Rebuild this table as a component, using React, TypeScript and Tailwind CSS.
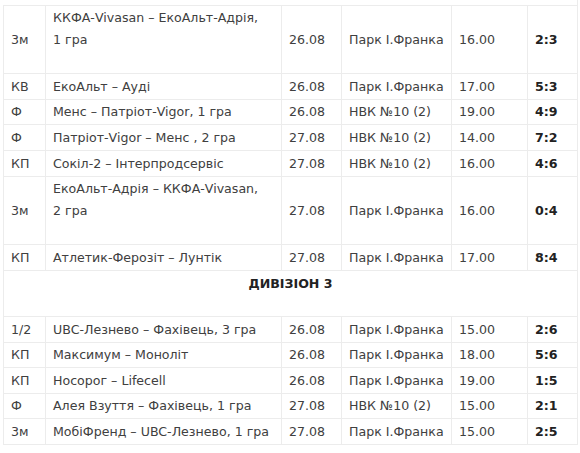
import React from "react";

type Row = {
  stage: string;
  match: string[];
  date: string;
  place: string;
  time: string;
  score: string;
};

const topRows: Row[] = [
  { stage: "3м", match: ["ККФА-Vivasan – ЕкоАльт-Адрія,", "1 гра", ""], date: "26.08", place: "Парк І.Франка", time: "16.00", score: "2:3" },
  { stage: "КВ", match: ["ЕкоАльт – Ауді"], date: "26.08", place: "Парк І.Франка", time: "17.00", score: "5:3" },
  { stage: "Ф", match: ["Менс – Патріот-Vigor, 1 гра"], date: "26.08", place: "НВК №10 (2)", time: "19.00", score: "4:9" },
  { stage: "Ф", match: ["Патріот-Vigor – Менс , 2 гра"], date: "27.08", place: "НВК №10 (2)", time: "14.00", score: "7:2" },
  { stage: "КП", match: ["Сокіл-2 – Інтерпродсервіс"], date: "27.08", place: "НВК №10 (2)", time: "16.00", score: "4:6" },
  { stage: "3м", match: ["ЕкоАльт-Адрія – ККФА-Vivasan,", "2 гра", ""], date: "27.08", place: "Парк І.Франка", time: "16.00", score: "0:4" },
  { stage: "КП", match: ["Атлетик-Ферозіт – Лунтік"], date: "27.08", place: "Парк І.Франка", time: "17.00", score: "8:4" },
];

const div3Rows: Row[] = [
  { stage: "1/2", match: ["UBC-Лезнево – Фахівець, 3 гра"], date: "26.08", place: "Парк І.Франка", time: "15.00", score: "2:6" },
  { stage: "КП", match: ["Максимум – Моноліт"], date: "26.08", place: "Парк І.Франка", time: "18.00", score: "5:6" },
  { stage: "КП", match: ["Носорог – Lifecell"], date: "26.08", place: "Парк І.Франка", time: "19.00", score: "1:5" },
  { stage: "Ф", match: ["Алея Взуття – Фахівець, 1 гра"], date: "27.08", place: "НВК №10 (2)", time: "15.00", score: "2:1" },
  { stage: "3м", match: ["МобіФренд – UBC-Лезнево, 1 гра"], date: "27.08", place: "Парк І.Франка", time: "15.00", score: "2:5" },
];

const td = "border border-[#ececec] px-[7px] py-[1.5px] align-middle";

const MatchRow: React.FC<{ row: Row }> = ({ row }) => (
  <tr>
    <td className={td}>{row.stage}</td>
    <td className={td}>
      {row.match.map((line, i) => (
        <div key={i} className="h-[21.6px]">
          {line}
        </div>
      ))}
    </td>
    <td className={td}>{row.date}</td>
    <td className={td}>{row.place}</td>
    <td className={td}>{row.time}</td>
    <td className={`${td} font-bold text-[#222]`}>{row.score}</td>
  </tr>
);

const App: React.FC = () => {
  return (
    <div className="min-h-screen bg-white px-[3px] font-['DejaVu_Sans',Verdana,sans-serif] text-[12.6px] leading-[21.6px] text-[#404040]">
      <table className="w-[574px] table-fixed border-collapse">
        <colgroup>
          <col className="w-[42px]" />
          <col className="w-[236px]" />
          <col className="w-[60px]" />
          <col className="w-[110px]" />
          <col className="w-[76px]" />
          <col className="w-[50px]" />
        </colgroup>
        <tbody>
          <tr>
            <td colSpan={6} className="h-[5px] border-r border-[#ececec] p-0" />
          </tr>
          {topRows.map((r, i) => (
            <MatchRow key={i} row={r} />
          ))}
          <tr>
            <td colSpan={6} className={`${td} text-center align-top font-bold text-[#222]`}>
              <div className="h-[21.6px]">ДИВІЗІОН 3</div>
              <div className="h-[20.4px]" />
            </td>
          </tr>
          {div3Rows.map((r, i) => (
            <MatchRow key={i} row={r} />
          ))}
        </tbody>
      </table>
    </div>
  );
};

export default App;
